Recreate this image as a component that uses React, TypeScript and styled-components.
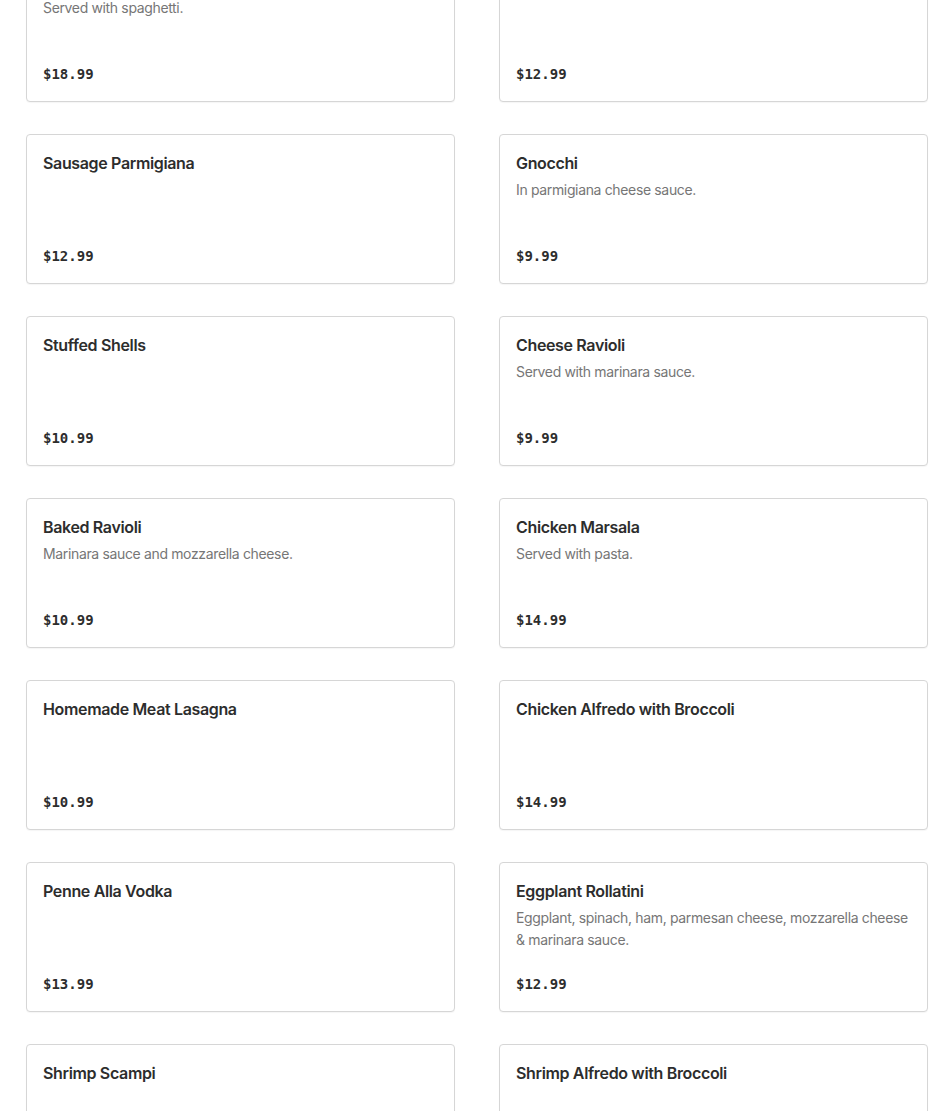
import React from "react";
import styled, { createGlobalStyle } from "styled-components";

const GlobalStyle = createGlobalStyle`
  html, body {
    margin: 0;
    padding: 0;
    background: #fff;
  }
  * {
    box-sizing: border-box;
  }
`;

const MenuGrid = styled.div`
  display: grid;
  grid-template-columns: 429px 429px;
  column-gap: 44px;
  row-gap: 32px;
  margin: -48px 0 0 26px;
  padding-bottom: 40px;
`;

const Card = styled.div`
  display: flex;
  flex-direction: column;
  min-height: 150px;
  padding: 16px 16px 17px;
  border: 1px solid #d6d6d6;
  border-radius: 4px;
  background: #fff;
  box-shadow: 0 1px 1px rgba(0, 0, 0, 0.04);
`;

const ItemName = styled.div`
  font-family: Inter, "Liberation Sans", sans-serif;
  font-size: 16px;
  line-height: 24px;
  font-weight: 600;
  letter-spacing: -0.35px;
  color: #2d2d2d;
`;

const ItemDesc = styled.div`
  margin-top: 4px;
  font-family: Inter, "Liberation Sans", sans-serif;
  font-size: 14px;
  line-height: 22px;
  letter-spacing: -0.35px;
  color: #767676;
`;

const Price = styled.div`
  margin-top: auto;
  padding-top: 22px;
  font-family: "DejaVu Sans Mono", "Liberation Mono", monospace;
  font-size: 14px;
  line-height: 20px;
  font-weight: 700;
  color: #2d2d2d;
`;

type Item = { name: string; desc?: string; price: string };

const items: Item[] = [
  { name: "Veal Parmigiana", desc: "Served with spaghetti.", price: "$18.99" },
  { name: "Chicken Parmigiana", price: "$12.99" },
  { name: "Sausage Parmigiana", price: "$12.99" },
  { name: "Gnocchi", desc: "In parmigiana cheese sauce.", price: "$9.99" },
  { name: "Stuffed Shells", price: "$10.99" },
  { name: "Cheese Ravioli", desc: "Served with marinara sauce.", price: "$9.99" },
  { name: "Baked Ravioli", desc: "Marinara sauce and mozzarella cheese.", price: "$10.99" },
  { name: "Chicken Marsala", desc: "Served with pasta.", price: "$14.99" },
  { name: "Homemade Meat Lasagna", price: "$10.99" },
  { name: "Chicken Alfredo with Broccoli", price: "$14.99" },
  { name: "Penne Alla Vodka", price: "$13.99" },
  {
    name: "Eggplant Rollatini",
    desc: "Eggplant, spinach, ham, parmesan cheese, mozzarella cheese & marinara sauce.",
    price: "$12.99",
  },
  { name: "Shrimp Scampi", price: "$15.99" },
  { name: "Shrimp Alfredo with Broccoli", price: "$16.99" },
];

const App: React.FC = () => {
  return (
    <>
      <GlobalStyle />
      <MenuGrid>
        {items.map((item) => (
          <Card key={item.name}>
            <ItemName>{item.name}</ItemName>
            {item.desc && <ItemDesc>{item.desc}</ItemDesc>}
            <Price>{item.price}</Price>
          </Card>
        ))}
      </MenuGrid>
    </>
  );
};

export default App;
